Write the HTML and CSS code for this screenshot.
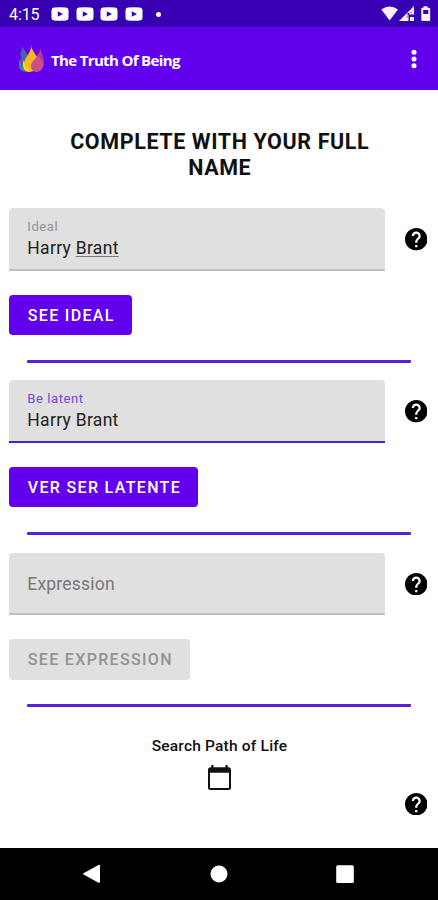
FILE: index.html
```html
<!DOCTYPE html>
<html lang="en">
<head>
<meta charset="utf-8">
<title>The Truth Of Being</title>
<link rel="stylesheet" href="styles.css">
</head>
<body>
<svg class="defs" width="0" height="0" aria-hidden="true">
  <symbol id="help" viewBox="2 2 20 20"><path d="M12 2C6.480 2 2 6.480 2 12s4.480 10 10 10 10-4.480 10-10S17.520 2 12 2zm1 17h-2v-2h2v2zm2.070-7.750l-.9.920C13.450 12.900 13 13.500 13 15h-2v-.5c0-1.100.45-2.100 1.170-2.830l1.240-1.260c.37-.36.59-.86.59-1.410 0-1.100-.9-2-2-2s-2 .9-2 2H8c0-2.210 1.790-4 4-4s4 1.790 4 4c0 .88-.36 1.680-.93 2.250z"/></symbol>
  <symbol id="video" viewBox="0 0 18 14"><path fill-rule="evenodd" d="M3 .5Q9 0 15 .5Q17.500.8 17.500 3V11Q17.500 13.200 15 13.500Q9 14 3 13.500Q.5 13.200.5 11V3Q.5.8 3 .5ZM6.800 4.300V9.700L12 7Z"/></symbol>
</svg>
<div class="screen">
  <header class="status">
    <span class="clock">4:15</span>
    <div class="videos">
      <svg><use href="#video"/></svg><svg><use href="#video"/></svg><svg><use href="#video"/></svg><svg><use href="#video"/></svg>
    </div>
    <i class="dot"></i>
    <svg class="signals" viewBox="0 0 50 16">
      <path d="M.3 3.500Q8.500-2.500 17 3.500L8.700 14.500Z"/>
      <path fill-rule="evenodd" d="M18 15L33 0V8.500H27.500V15ZM25 11.500L30.500 5.500V7H26.500V11.500Z"/>
      <path d="M29 11h4v4h-4z"/>
      <path fill-rule="evenodd" d="M42.500.3H46.500V1.800H48.300Q49.200 1.800 49.200 2.700V14.100Q49.200 15 48.300 15H41.200Q40.300 15 40.300 14.100V2.700Q40.300 1.800 41.200 1.800H42.500ZM42.200 4V8H47.300V4Z"/>
    </svg>
  </header>
  <div class="appbar">
    <svg class="logo" viewBox="0 0 26 28">
      <path fill="#4d62a5" d="M4 1C6 5 11 9 10 17L8 25Q1 25 1 18C2 15 5 13 2 9Q4 6 4 1Z"/>
      <path fill="#348c9b" d="M1 13Q2 21 9 27Q1 27 1 20Z"/>
      <path fill="#b83591" d="M23 2C22 7 27 12 26 19Q25 26 18 27L14 19C15 13 21 11 23 2Z"/>
      <path fill="#f8b51f" d="M13.500 0C13 6 20 10 20 16Q20 27 12 27Q5 26 6 18C7 12 13 8 13.500 0Z"/>
      <path fill="#c8508c" d="M20 10C18 14 13 16 13 21Q13 26 18 27Q25 26 25 19Q24 15 20 10Z"/>
      <path fill="#ffd71b" d="M5 15Q7 21 12 27Q6 27 5 21Z"/>
    </svg>
    <h1 class="app-title">The Truth Of Being</h1>
    <svg class="more" viewBox="0 0 6 20"><circle cx="3" cy="3.300" r="2.500"/><circle cx="3" cy="10" r="2.500"/><circle cx="3" cy="16.700" r="2.500"/></svg>
  </div>
  <main class="content">
    <h2 class="heading">COMPLETE WITH YOUR FULL<br>NAME</h2>
    <section class="block">
      <div class="row">
        <div class="field"><span class="label">Ideal</span><span class="value">Harry <span class="spell">Brant</span></span></div>
        <svg class="help"><use href="#help"/></svg>
      </div>
      <button class="btn ideal">SEE IDEAL</button>
      <div class="rule"></div>
    </section>
    <section class="block">
      <div class="row">
        <div class="field focused"><span class="label">Be latent</span><span class="value">Harry Brant</span></div>
        <svg class="help"><use href="#help"/></svg>
      </div>
      <button class="btn latent">VER SER LATENTE</button>
      <div class="rule"></div>
    </section>
    <section class="block">
      <div class="row">
        <div class="field empty"><span class="placeholder">Expression</span></div>
        <svg class="help"><use href="#help"/></svg>
      </div>
      <button class="btn expression" disabled>SEE EXPRESSION</button>
      <div class="rule"></div>
    </section>
    <section class="path">
      <h3 class="path-title">Search Path of Life</h3>
      <svg class="calendar" viewBox="0 0 23 25"><path fill-rule="evenodd" d="M3.300 0H5.500V2.300H17.500V0H19.700V2.300H20.500Q23 2.300 23 4.800V22.500Q23 25 20.500 25H2.500Q0 25 0 22.500V4.800Q0 2.300 2.500 2.300H3.300ZM2 7.800V23H21V7.800Z"/></svg>
      <svg class="help"><use href="#help"/></svg>
    </section>
  </main>
  <nav class="navbar">
    <svg viewBox="0 0 18 20"><path d="M.5 9.200Q-.2 9.800.5 10.400L15.500 18.700Q17 19.200 17 17.800V1.800Q17 .5 15.500 1Z"/></svg>
    <svg viewBox="0 0 18 20"><circle cx="9" cy="10" r="8.500"/></svg>
    <svg viewBox="0 0 18 20"><rect x=".2" y="1.300" width="17.600" height="17.600" rx="1.500"/></svg>
  </nav>
</div>
</body>
</html>
```
FILE: styles.css
```css
* { box-sizing: border-box; }
body { margin: 0; background: #fff; font-family: Roboto, sans-serif; }
svg { display: block; flex: none; }
h1, h2, h3 { margin: 0; }
.defs { position: absolute; }
.screen { width: 438px; height: 900px; display: flex; flex-direction: column; overflow: hidden; }

.status { height: 27px; background: #3700b3; color: #fff; display: flex; align-items: center; padding: 1px 7px 0 9px; }
.clock { width: 42px; padding-top: 1px; font-size: 16px; letter-spacing: -0.100px; line-height: 26px; white-space: nowrap; }
.videos { display: flex; gap: 6.700px; fill: #fff; }
.videos svg { width: 18px; height: 14px; }
.dot { width: 5px; height: 5px; border-radius: 50%; background: #fff; margin-left: 13px; }
.signals { width: 50px; height: 16px; margin-left: auto; fill: #f4f0ff; }

.appbar { height: 62.500px; background: #6200ee; display: flex; align-items: center; padding: 2px 21.500px 0 18px; }
.logo { width: 26px; height: 28px; }
.app-title { margin: 2px 0 0 7px; color: #fff; font: bold 15px/24px "Open Sans", sans-serif; letter-spacing: -0.650px; white-space: nowrap; }
.more { width: 6px; height: 20px; margin: 0 0 0 auto; fill: #fff; }

.content { flex: 1; display: flex; flex-direction: column; }
.heading { height: 118.500px; padding: 39px 0 0 1.500px; text-align: center; font-size: 21.500px; line-height: 26px; letter-spacing: 0.600px; color: #111; }
.block { height: 172.300px; display: flex; flex-direction: column; align-items: flex-start; padding-left: 9.300px; flex: none; }
.row { display: flex; align-items: center; gap: 20px; }
.field { width: 375.500px; height: 62.500px; background: #e0e0e0; border-radius: 4px 4px 0 0; border-bottom: 2px solid #c0c0c0; padding: 10px 18px 0; display: flex; flex-direction: column; }
.label { font-size: 13px; line-height: 18px; letter-spacing: 0.600px; color: #929292; }
.value { font-size: 17.500px; line-height: 24px; letter-spacing: 0.300px; color: #222; }
.spell { text-decoration: underline; text-decoration-color: #777; text-decoration-thickness: 1px; text-underline-offset: 2px; }
.focused { border-color: #4d20cf; }
.focused .label { color: #7346e6; }
.placeholder { margin-top: 9px; font-size: 17.500px; line-height: 24px; letter-spacing: 0.200px; color: #777; }
.help { width: 22.500px; height: 22.500px; fill: #000; }
.btn { height: 40.500px; margin: 24px 0 24.500px; padding: 1px 0 0 18.500px; border: 0; border-radius: 4px; background: #6200ee; color: #fff; font: 500 16px/40px Roboto, sans-serif; letter-spacing: 1.330px; text-align: left; white-space: nowrap; }
.btn:disabled { background: #e0e0e0; color: #929292; }
.ideal { width: 123px; }
.latent { width: 189px; }
.expression { width: 181px; }
.rule { width: 384px; height: 3px; margin-left: 18px; background: #5820d8; border-radius: 1px; }

.path { display: flex; flex-direction: column; align-items: center; padding-top: 9px; }
.path-title { padding-left: 1px; font-size: 15.500px; font-weight: 500; line-height: 24px; letter-spacing: 0.200px; color: #111; }
.calendar { width: 23px; height: 25px; margin-top: 7px; fill: #111; }
.path .help { align-self: flex-end; margin: 3px 10.800px 0 0; }

.navbar { height: 52.500px; background: #000; display: flex; justify-content: space-between; align-items: center; padding: 0 84px 0 83px; }
.navbar svg { width: 18px; height: 20px; fill: #fff; }
```
